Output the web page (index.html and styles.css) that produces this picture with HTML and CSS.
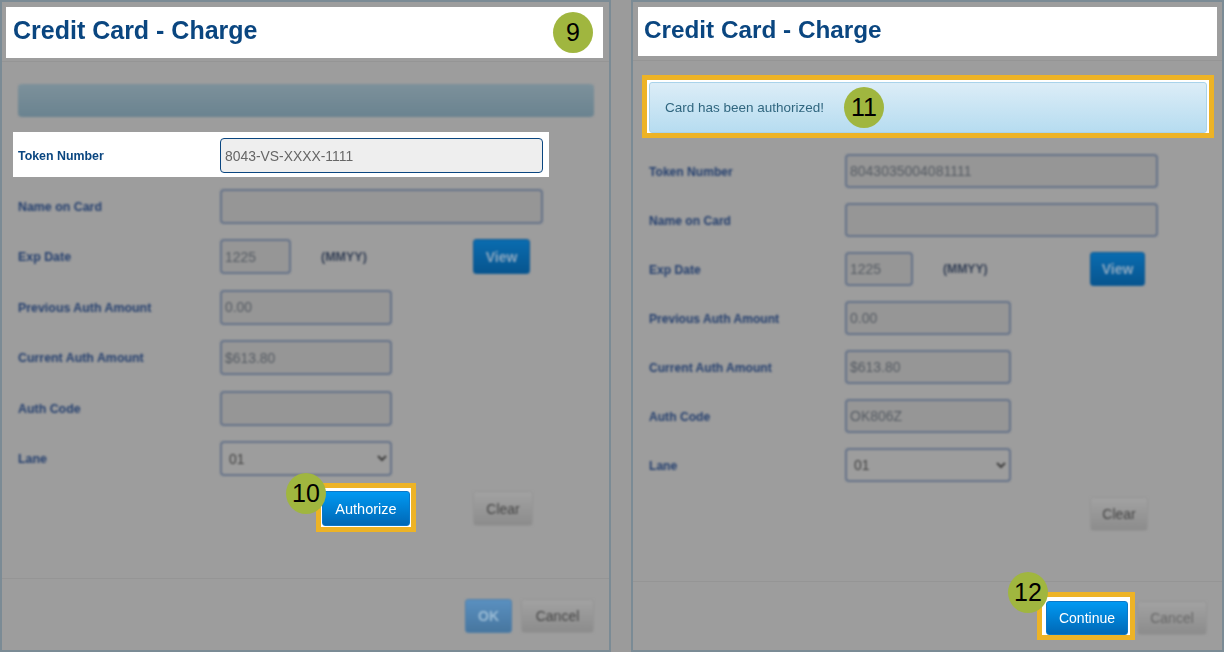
FILE: index.html
```html
<!DOCTYPE html>
<html>
<head>
  <meta charset="UTF-8">
  <title>Credit Card - Charge</title>
  <link rel="stylesheet" href="styles.css">
</head>
<body>
  <div class="panel panel-left">
    <div class="panel-head"><h2>Credit Card - Charge</h2></div>
    <span class="step step-9">9</span>

    <div class="panel-body">
      <div class="alert alert-empty"></div>

      <div class="rows">
        <div class="row row-hl">
          <label>Token Number</label>
          <input type="text" class="w-lg" value="8043-VS-XXXX-1111">
        </div>
        <div class="row">
          <label>Name on Card</label>
          <input type="text" class="w-lg">
        </div>
        <div class="row">
          <label>Exp Date</label>
          <input type="text" class="w-sm" value="1225">
          <span class="unit">(MMYY)</span>
          <button class="btn btn-blue btn-view">View</button>
        </div>
        <div class="row">
          <label>Previous Auth Amount</label>
          <input type="text" class="w-md" value="0.00">
        </div>
        <div class="row">
          <label>Current Auth Amount</label>
          <input type="text" class="w-md" value="$613.80">
        </div>
        <div class="row">
          <label>Auth Code</label>
          <input type="text" class="w-md">
        </div>
        <div class="row">
          <label>Lane</label>
          <select class="w-md"><option>01</option></select>
        </div>
      </div>

      <div class="actions">
        <div class="gold">
          <button class="btn btn-live btn-authorize">Authorize</button>
        </div>
        <button class="btn btn-grey btn-clear">Clear</button>
      </div>
    </div>
    <span class="step step-10">10</span>

    <div class="panel-foot">
      <button class="btn btn-ok">OK</button>
      <button class="btn btn-grey btn-cancel">Cancel</button>
    </div>
  </div>

  <div class="panel panel-right">
    <div class="panel-head"><h2>Credit Card - Charge</h2></div>

    <div class="panel-body">
      <div class="gold gold-alert">
        <div class="alert alert-live">Card has been authorized!</div>
      </div>
      <span class="step step-11">11</span>

      <div class="rows">
        <div class="row">
          <label>Token Number</label>
          <input type="text" class="w-lg" value="8043035004081111">
        </div>
        <div class="row">
          <label>Name on Card</label>
          <input type="text" class="w-lg">
        </div>
        <div class="row">
          <label>Exp Date</label>
          <input type="text" class="w-sm" value="1225">
          <span class="unit">(MMYY)</span>
          <button class="btn btn-blue btn-view">View</button>
        </div>
        <div class="row">
          <label>Previous Auth Amount</label>
          <input type="text" class="w-md" value="0.00">
        </div>
        <div class="row">
          <label>Current Auth Amount</label>
          <input type="text" class="w-md" value="$613.80">
        </div>
        <div class="row">
          <label>Auth Code</label>
          <input type="text" class="w-md" value="OK806Z">
        </div>
        <div class="row">
          <label>Lane</label>
          <select class="w-md"><option>01</option></select>
        </div>
      </div>

      <div class="actions">
        <button class="btn btn-grey btn-clear">Clear</button>
      </div>
    </div>

    <div class="panel-foot">
      <div class="gold gold-continue">
        <button class="btn btn-live btn-continue">Continue</button>
      </div>
      <button class="btn btn-grey btn-cancel">Cancel</button>
    </div>
    <span class="step step-12">12</span>
  </div>
</body>
</html>
```

FILE: styles.css
```css
* {
  box-sizing: border-box;
}

body {
  margin: 0;
  width: 1224px;
  height: 652px;
  overflow: hidden;
  display: flex;
  background: #9b9b9b;
  font-family: "Liberation Sans", Arial, sans-serif;
}

.panel {
  position: relative;
  height: 652px;
  display: flex;
  flex-direction: column;
  background: #9d9d9d;
  border: 2px solid #7b8b95;
}

.panel-left {
  width: 611px;
}

.panel-right {
  width: 593px;
  margin-left: 20px;
}

/* header */
.panel-head {
  height: 60px;
  padding-top: 5px;
  border-bottom: 1px solid #959595;
}

.panel-head h2 {
  margin: 0;
  background: white;
  color: #0a4680;
  font-weight: bold;
  filter: blur(0.4px);
}

.panel-left .panel-head h2 {
  height: 51px;
  margin: 0 6px 0 4px;
  padding-left: 7px;
  font-size: 25px;
  line-height: 47px;
}

.panel-right .panel-head {
  height: 59px;
}

.panel-right .panel-head h2 {
  height: 49px;
  margin: 0 5px 0 5px;
  padding-left: 6px;
  font-size: 24.3px;
  line-height: 46px;
}

/* body */
.panel-body {
  padding: 0 15px 0 16px;
}

.alert-empty {
  height: 33px;
  margin-top: 22px;
  border-radius: 4px;
  background: linear-gradient(#7d919b, #6a8390);
  filter: blur(0.8px);
}

.alert-live {
  height: 51px;
  padding-left: 15px;
  border: 1px solid #a9d3ea;
  border-radius: 3px;
  background: linear-gradient(#dcedf7, #b6dcf0);
  color: #30667f;
  font-size: 13.5px;
  line-height: 49px;
  filter: blur(0.3px);
}

.gold {
  border: 5px solid #edb326;
  background: white;
}

.gold-alert {
  margin: 14px -7px 0;
  padding: 2px 2px 0;
}

.rows {
  display: flex;
  flex-direction: column;
}

.panel-left .rows {
  margin-top: 21px;
  gap: 15.5px;
}

.panel-right .rows {
  margin-top: 16px;
  gap: 15px;
}

.row {
  display: flex;
  align-items: center;
}

.panel-left .row {
  height: 35px;
}

.panel-right .row {
  height: 34px;
}

.row label {
  width: 202px;
  flex: none;
  padding-top: 1px;
  color: #243f6e;
  font-size: 12.4px;
  font-weight: bold;
  filter: blur(0.8px);
}

.panel-right .row label {
  width: 196px;
  font-size: 12.1px;
}

.row input,
.row select {
  height: 100%;
  padding: 0 3px;
  background: #969696;
  border: 2px solid #667389;
  border-radius: 4px;
  color: #555b63;
  font-family: inherit;
  font-size: 13.9px;
  filter: blur(0.8px);
}

.row select {
  padding-left: 3px;
  background: #9d9d9d;
  color: #3f3f3f;
}

.panel-left .w-lg { width: 323px; }
.panel-left .w-md { width: 172px; }
.panel-left .w-sm { width: 71px; }
.panel-right .w-lg { width: 313px; }
.panel-right .w-md { width: 166px; }
.panel-right .w-sm { width: 68px; }

.panel-right .row input {
  font-size: 14px;
}

/* the highlighted row sits on a white strip */
.row-hl {
  margin: -6px 0 -4px -5px;
  width: 536px;
  height: 45px !important;
  padding: 6px 6px 4px 5px;
  background: white;
}

.row-hl label {
  padding-top: 0;
  color: #0a4680;
  filter: blur(0.3px);
}

.row-hl input {
  background: #eeeeee;
  border: 1px solid #0a4680;
  padding: 0 4px;
  color: #666;
  filter: blur(0.3px);
}

.unit {
  width: 152px;
  margin-left: 30px;
  color: #333f55;
  font-size: 12.5px;
  font-weight: bold;
  filter: blur(0.8px);
}

.panel-right .unit {
  width: 147px;
  font-size: 12.2px;
}

/* buttons */
.btn {
  padding: 0;
  border-radius: 3px;
  font-family: inherit;
  font-size: 14px;
}

.btn-blue {
  border: 1px solid #125a92;
  background: linear-gradient(#0a6cb0, #07558f);
  color: #8fa9c0;
  font-weight: bold;
  filter: blur(0.8px);
}

.btn-view {
  width: 57px;
  height: 35px;
}

.panel-right .btn-view {
  width: 55px;
  height: 34px;
}

.btn-live {
  border: 1px solid #0a78c8;
  background: linear-gradient(#0099f2, #0068b6);
  color: white;
  filter: blur(0.3px);
}

.btn-authorize {
  display: block;
  width: 88px;
  height: 35px;
  font-size: 14.5px;
}

.btn-grey {
  border: 1px solid #959595;
  background: linear-gradient(#a2a2a2, #8c8c8c);
  color: #444;
  filter: blur(0.8px);
}

.btn-ok {
  width: 47px;
  height: 34px;
  border: 1px solid #527fa8;
  background: linear-gradient(#5a90c0, #47769f);
  color: #9cbdd6;
  font-weight: bold;
  filter: blur(0.8px);
}

.actions {
  display: flex;
  margin-top: 15px;
}

.actions .gold {
  margin: -8px 0 -6px 298px;
  padding: 3px 1px 1px;
}

.btn-clear {
  width: 60px;
  height: 35px;
  margin-left: 57px;
}

.panel-right .btn-clear {
  width: 58px;
  height: 34px;
  margin-left: 441px;
}

/* footer */
.panel-foot {
  margin-top: auto;
  display: flex;
  justify-content: flex-end;
  align-items: flex-end;
  border-top: 1px solid #959595;
  padding-right: 15px;
}

.panel-left .panel-foot {
  gap: 9px;
  padding-top: 20px;
  padding-bottom: 17px;
}

.panel-right .panel-foot {
  gap: 2px;
  padding-top: 10px;
  padding-bottom: 10px;
}

.btn-cancel {
  width: 73px;
  height: 34px;
}

.panel-right .btn-cancel {
  width: 70px;
  margin-bottom: 5px;
  color: #666;
}

.gold-continue {
  padding: 4px 2px 0 4px;
}

.btn-continue {
  display: block;
  width: 82px;
  height: 34px;
}

/* numbered callouts */
.step {
  position: absolute;
  z-index: 2;
  width: 40px;
  height: 41px;
  border-radius: 50%;
  background: #a0b63f;
  color: black;
  font-size: 25px;
  line-height: 41px;
  text-align: center;
}

.step-9 { left: 551px; top: 10px; }
.step-10 { left: 284px; top: 471px; }
.step-11 { left: 211px; top: 85px; }
.step-12 { left: 375px; top: 570px; }
```
